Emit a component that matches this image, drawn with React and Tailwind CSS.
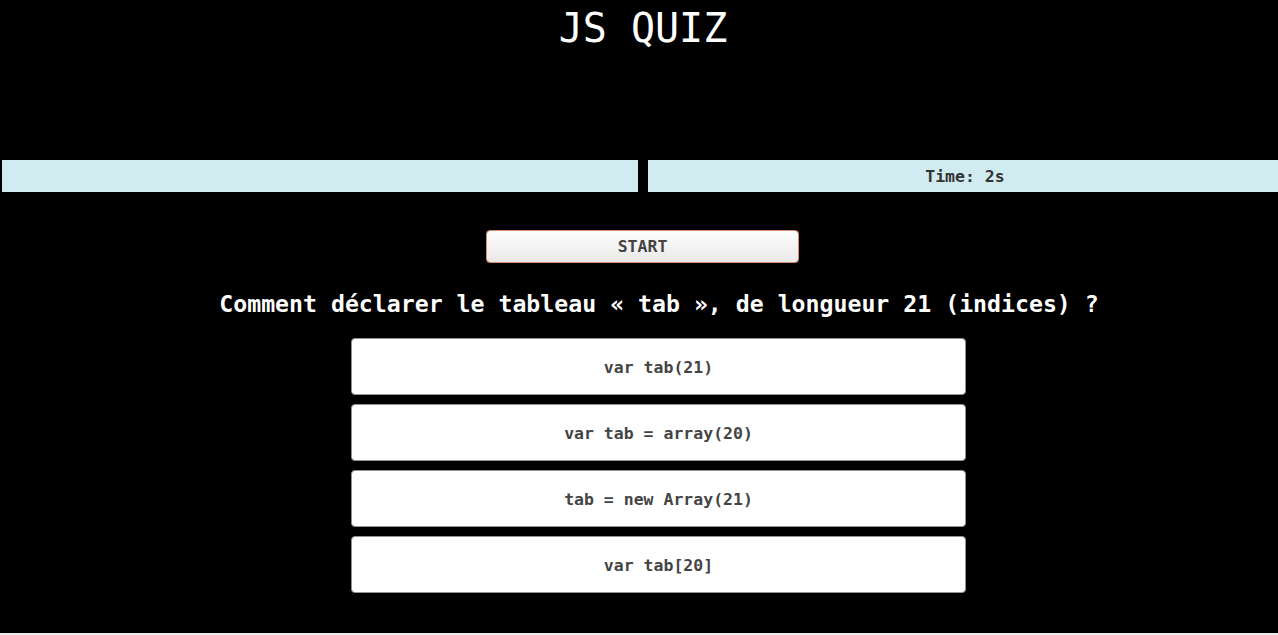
import React from 'react'

function App() {
  const answers = ['var tab(21)', 'var tab = array(20)', 'tab = new Array(21)', 'var tab[20]']

  return (
    <div className="min-h-[635px] bg-[#ebebeb]">
      <div className="h-[633px] bg-black font-['DejaVu_Sans_Mono',monospace]">
        <h1 className="pt-2 pl-[8px] text-center text-[40px] leading-[40px] font-normal text-white">JS QUIZ</h1>

        {/* Progress / timer bars */}
        <div className="mt-[112px] flex gap-[10px] pl-[2px]">
          <div className="h-[32px] w-[636px] bg-[#d1ecf1]"></div>
          <div className="flex h-[32px] flex-1 items-center justify-center bg-[#d1ecf1] pt-[2px] pl-[4px] text-[16.5px] font-bold text-[#333]">
            Time: 2s
          </div>
        </div>

        <button className="mt-[38px] ml-[486px] flex h-[33px] w-[313px] items-center justify-center rounded-[4px] border border-[#d98d6c] bg-gradient-to-b from-[#fdfdfd] to-[#e9e9e9] pt-[1px] text-[16.5px] font-bold text-[#444]">
          START
        </button>

        <h2 className="mt-[27px] pl-[40px] text-center text-[23.2px] leading-[28px] font-bold text-white">
          Comment déclarer le tableau « tab », de longueur 21 (indices) ?
        </h2>

        <div className="mt-[20px] ml-[351px] flex w-[615px] flex-col gap-[9px]">
          {answers.map((a) => (
            <div
              key={a}
              className="flex h-[57px] items-center justify-center rounded-[4px] border border-[#8e939a] bg-white pt-[3px] text-[16.5px] font-bold text-[#444]"
            >
              {a}
            </div>
          ))}
        </div>
      </div>
    </div>
  )
}

export default App
